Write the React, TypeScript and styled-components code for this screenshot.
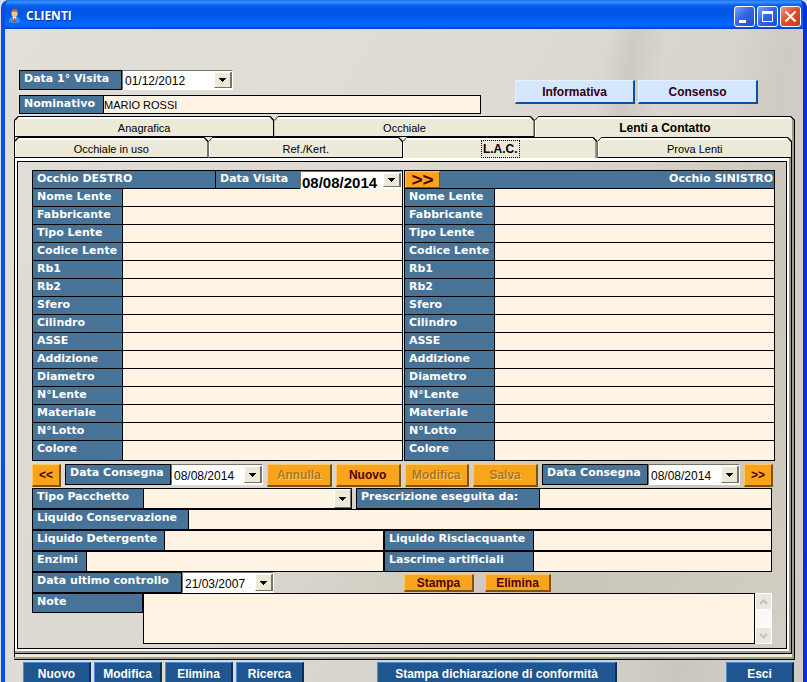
import React, { useId } from "react";
import styled, { createGlobalStyle, css } from "styled-components";

const color = {
  face: "#ece9d8",
  cream: "#fff3e3",
  steel: "#467397",
  orange: "#f9a51c",
  navy: "#1f5690",
  ink: "#000",
};
const sans = `"Liberation Sans", Arial, sans-serif`;
const caption = `"DejaVu Sans", Verdana, sans-serif`;

const GlobalStyle = createGlobalStyle`
  * { box-sizing: border-box; }
  body { margin: 0; overflow: hidden; background: #d9def5; font: 12px ${sans}; color: ${color.ink}; }
  button, input, select, textarea { font: inherit; color: inherit; border-radius: 0; margin: 0; }
`;

const Window = styled.main`
  min-height: 100vh;
  margin-left: 1px;
  display: flex;
  flex-direction: column;
  border-style: solid;
  border-color: #0a4be0 #0831d0 #0a4be0 #0a4fe4;
  border-width: 0 4px;
  border-radius: 8px 8px 0 0;
  overflow: hidden;
  background: #0a4be0;
`;

const TitleBar = styled.header`
  height: 29px;
  margin: 0 -4px;
  padding: 3px 6px 0 6px;
  display: flex;
  align-items: center;
  gap: 4px;
  background: linear-gradient(#1c6cf0 0, #3a94ff 2px, #0a62ee 5px, #0055e5 10px, #0058ea 16px, #0468ff 23px, #0364fa 26px, #0040c8 29px);
`;

const Title = styled.h1`
  flex: 1;
  margin: 0;
  font: bold 12px/20px "Open Sans", "Trebuchet MS", sans-serif;
  color: #fff;
  text-shadow: 1px 1px 0 #0a2f8f;
`;

const Controls = styled.div`
  display: flex;
  gap: 2px;
`;

const ControlButton = styled.button<{ $close?: boolean }>`
  width: 21px;
  height: 21px;
  padding: 0;
  border: 1px solid #fff;
  border-radius: 3px;
  background: ${(p) =>
    p.$close
      ? "linear-gradient(135deg, #f0987c, #e0512c 45%, #c83c14)"
      : "linear-gradient(135deg, #7ba2f5, #3566e4 45%, #1d4bd2)"};
  svg { display: block; }
`;

const Body = styled.div`
  flex: 1;
  padding: 41px 8px 0 9px;
  background:
    linear-gradient(100deg, transparent 66%, rgba(160, 155, 145, 0.22) 69%, transparent 73%, transparent 80%, rgba(160, 155, 145, 0.15) 86%, transparent 92%),
    linear-gradient(120deg, #e2dfd8 0%, #dedbd4 45%, #d3cfc6 80%, #d0ccc2 100%);
`;

const Heading = styled.div`
  display: flex;
  align-items: flex-end;
  padding: 0 37px 2px 5px;
`;

const Identity = styled.div`
  flex: 0 1 462px;
  display: flex;
  flex-direction: column;
  gap: 5px;
`;

const Notices = styled.div`
  display: flex;
  gap: 3px;
  margin: 0 0 10px auto;
`;

const Line = styled.div<{ $height: number }>`
  display: flex;
  height: ${(p) => p.$height}px;
`;

const Caption = styled.label<{ $width: number }>`
  flex: none;
  width: ${(p) => p.$width}px;
  padding-left: 4px;
  background: ${color.steel};
  border: 1px solid ${color.ink};
  color: #fff;
  font: bold 11px/15px ${caption};
  white-space: nowrap;
`;

const TextField = styled.input`
  flex: 1;
  min-width: 0;
  padding: 0;
  border: 1px solid ${color.ink};
  border-left: 0;
  outline: 0;
  background: ${color.cream};
  font-size: 11px;
`;

const DateBox = styled.div<{ $width: number; $big?: boolean }>`
  flex: none;
  width: ${(p) => p.$width}px;
  display: flex;
  background: #fff;
  border: 1px solid;
  border-color: #77746a #fff #fff #77746a;
  font: ${(p) => (p.$big ? `bold 15px ${sans}` : `12px ${sans}`)};
  input {
    flex: 1;
    width: 0;
    min-width: 0;
    padding: ${(p) => (p.$big ? "4px 0 0 1px" : "2px 0 0 2px")};
    border: 0;
    outline: 0;
    background: none;
  }
`;

const ArrowButton = styled.button`
  flex: 0 0 17px;
  padding: 0;
  display: grid;
  place-items: center;
  background: ${color.face};
  border: 1px solid;
  border-color: #fff #77746a #77746a #fff;
  box-shadow: 1px 0 0 #77746a;
  margin: 1px;
`;

const PushButton = styled.button<{ $tone: "sky" | "orange" | "navy"; $width?: number }>`
  ${(p) => (p.$width ? `flex: none; width: ${p.$width}px;` : "flex: 1;")}
  padding: 0;
  white-space: nowrap;
  font: bold 12px ${sans};
  border: 1px solid;
  border-width: 1px 2px 2px 1px;
  ${(p) =>
    p.$tone === "sky" &&
    css`
      height: 24px;
      background: #d5e6ff;
      color: #300010;
      border-color: #e8f2ff #0a4fa8 #0a4fa8 #e8f2ff;
    `}
  ${(p) =>
    p.$tone === "orange" &&
    css`
      background: ${color.orange};
      color: #500000;
      border-color: #ffc766 #7d5312 #7d5312 #ffc766;
      &:disabled {
        color: #b07416;
        text-shadow: 1px 1px 0 #ffd07a;
      }
    `}
  ${(p) =>
    p.$tone === "navy" &&
    css`
      height: 24px;
      background: ${color.navy};
      color: #fff;
      border-color: #4a8ad8 #0d2c58 #0d2c58 #4a8ad8;
    `}
`;

const Tabs = styled.div<{ $count: number }>`
  display: grid;
  grid-template-columns: repeat(${(p) => p.$count}, 1fr);
`;

const cutCorners = "polygon(0 4px, 4px 0, calc(100% - 4px) 0, 100% 4px, 100% 100%, 0 100%)";

const Tab = styled.button<{ $active?: boolean }>`
  position: relative;
  isolation: isolate;
  height: 21px;
  padding: 2px 0 0;
  border: 0;
  background: ${color.ink};
  clip-path: ${cutCorners};
  font: ${(p) => (p.$active ? "bold 12px" : "normal 11px")}/16px ${sans};
  &::before {
    content: "";
    position: absolute;
    z-index: -1;
    inset: 1px 1px ${(p) => (p.$active ? 0 : 1)}px 0;
    background: ${color.face};
    box-shadow: inset 1px 2px 0 #fff${(p) => (p.$active ? ", inset -2px 0 0 #9d9a8c" : "")};
    clip-path: ${cutCorners};
  }
  &:first-child::before { left: 1px; }
`;

const Focus = styled.span`
  display: inline-block;
  padding: 0 1px;
  outline: 1px dotted ${color.ink};
`;

const OuterPage = styled.section`
  padding: 0 2px 5px 0;
  border: solid ${color.ink};
  border-width: 0 1px 1px 0;
  background: ${color.face};
  box-shadow: inset -2px -2px 0 #a09d90, inset 1px 0 0 ${color.ink};
`;

const InnerPage = styled.section`
  padding: 3px 4px 4px 2px;
  border: solid ${color.ink};
  border-width: 0 1px 1px 1px;
  background: #fff;
  box-shadow: inset -2px -2px 0 #a09d90;
`;

const Sheet = styled.div`
  padding: 8px 11px 4px 14px;
  border: 1px solid ${color.ink};
  background: linear-gradient(125deg, #e0ddd6 0%, #dcd8d0 45%, #cbc6ba 75%, #d2cec4 100%);
`;

const Eyes = styled.div`
  display: grid;
  grid-template-columns: 1fr 1fr;
  gap: 1px;
`;

const Eye = styled.section`
  border: 1px solid ${color.ink};
  background: ${color.cream};
`;

const EyeHead = styled.header`
  display: flex;
  height: 18px;
  border-bottom: 1px solid ${color.ink};
  background: ${color.steel};
  color: #fff;
  font: bold 11px/15px ${caption};
`;

const EyeTitle = styled.h2<{ $right?: boolean }>`
  flex: 1;
  margin: 0;
  padding: 0 1px 0 4px;
  font: inherit;
  white-space: nowrap;
  text-align: ${(p) => (p.$right ? "right" : "left")};
`;

const VisitCaption = styled.label`
  flex: 0 0 85px;
  padding-left: 4px;
  border-left: 1px solid ${color.ink};
  white-space: nowrap;
`;

const VisitDate = styled.div`
  display: flex;
  height: 18px;
  color: ${color.ink};
`;

const CopyButton = styled.button`
  flex: 0 0 35px;
  padding: 0;
  border: 1px solid;
  border-color: #ffc766 #7d5312 #7d5312 #ffc766;
  background: ${color.orange};
  color: #500000;
  font: bold 19px/14px ${sans};
`;

const EyeRow = styled.div`
  display: flex;
  height: 18px;
  border-bottom: 1px solid ${color.ink};
  &:last-child { height: 19px; border-bottom: 0; }
  label {
    flex: 0 0 90px;
    padding-left: 4px;
    border-right: 1px solid ${color.ink};
    background: ${color.steel};
    color: #fff;
    font: bold 11px/15px ${caption};
    white-space: nowrap;
  }
  input {
    flex: 1;
    min-width: 0;
    padding: 0 3px;
    border: 0;
    outline: 0;
    background: none;
  }
`;

const Actions = styled.div`
  display: flex;
  gap: 4px;
  height: 23px;
  margin: 3px 2px 1px 0;
`;

const DateGroup = styled.div`
  display: flex;
  flex: none;
  height: 21px;
`;

const Details = styled.div`
  padding-right: 3px;
`;

const Pair = styled.div<{ $width?: number }>`
  display: flex;
  min-width: 0;
  ${(p) => (p.$width ? `flex: 0 0 ${p.$width}px;` : "flex: 1;")}
`;

const SelectBox = styled.div`
  flex: 1;
  margin-right: 4px;
  display: grid;
  grid-template-columns: 1fr 17px;
  border: 1px solid ${color.ink};
  border-left: 0;
  background: ${color.cream};
  select {
    grid-area: 1 / 1 / 2 / 3;
    appearance: none;
    border: 0;
    outline: 0;
    background: none;
  }
`;

const SelectArrow = styled.span`
  grid-area: 1 / 2;
  display: grid;
  place-items: center;
  pointer-events: none;
  background: ${color.face};
  border: 1px solid;
  border-color: #fff #77746a #77746a #fff;
`;

const Reports = styled.div`
  display: flex;
  gap: 11px;
  height: 18px;
  margin: 2px 0 0 130px;
`;

const NoteRow = styled.div`
  display: flex;
  align-items: flex-start;
  label { height: 20px; }
`;

const NoteText = styled.textarea`
  flex: 1;
  min-width: 0;
  height: 51px;
  padding: 2px;
  border: 1px solid ${color.ink};
  outline: 0;
  resize: none;
  overflow: hidden;
  background: ${color.cream};
`;

const Scroll = styled.div`
  flex: 0 0 17px;
  height: 51px;
  display: flex;
  flex-direction: column;
  justify-content: space-between;
  background: #fbfaf6;
  button {
    height: 17px;
    padding: 0;
    display: grid;
    place-items: center;
    border: 1px solid #fff;
    border-radius: 2px;
    background: #e9e8e0;
  }
`;

const Footer = styled.footer`
  display: flex;
  gap: 3px;
  padding: 2px 1px 0 9px;
`;

const Wide = styled.div`
  display: flex;
  flex: 0 1 240px;
  margin: 0 auto 0 70px;
`;

const Arrow = () => (
  <svg width="7" height="4" viewBox="0 0 7 4" shapeRendering="crispEdges" aria-hidden="true">
    <path d="M0 0h7L3.5 4z" />
  </svg>
);

const Chevron = ({ up }: { up?: boolean }) => (
  <svg width="9" height="6" viewBox="0 0 9 6" fill="none" stroke="#c4c2b8" strokeWidth="2" aria-hidden="true">
    <path d={up ? "M1 5l3.500-3.500L8 5" : "M1 1l3.500 3.500L8 1"} />
  </svg>
);

const PersonIcon = () => (
  <svg width="15" height="16" viewBox="0 0 15 16" aria-hidden="true">
    <path d="M2 14c0-4 2-5 5.500-5s5.500 1 5.500 5c-3 1.500-8 1.500-11 0z" fill="#3f8fe0" />
    <path d="M5.500 9l2 5 2-5z" fill="#fff" />
    <path d="M7 10h1.200l.6 3.500-1.200 1.200-1.200-1.200z" fill="#d03a22" />
    <ellipse cx="7.500" cy="5.500" rx="3" ry="3.800" fill="#f3c596" />
    <path d="M4.300 5.200C3.800 2 5.500.8 7.800.8s3.700 1.500 2.900 4.400C10 3.800 8.500 3.600 7 3.500 5.500 3.500 4.800 4 4.300 5.200z" fill="#a4682a" />
  </svg>
);

function DateField(p: { label: string; labelWidth: number; width: number; value: string }) {
  const id = useId();
  return (
    <>
      <Caption htmlFor={id} $width={p.labelWidth}>{p.label}</Caption>
      <DateBox $width={p.width}>
        <input id={id} defaultValue={p.value} />
        <ArrowButton aria-label={`Scegli ${p.label}`}><Arrow /></ArrowButton>
      </DateBox>
    </>
  );
}

function Field(p: { label: string; labelWidth: number; width?: number; value?: string }) {
  const id = useId();
  return (
    <Pair $width={p.width}>
      <Caption htmlFor={id} $width={p.labelWidth}>{p.label}</Caption>
      <TextField id={id} defaultValue={p.value} />
    </Pair>
  );
}

const eyeFields = [
  "Nome Lente", "Fabbricante", "Tipo Lente", "Codice Lente", "Rb1", "Rb2", "Sfero", "Cilindro",
  "ASSE", "Addizione", "Diametro", "N°Lente", "Materiale", "N°Lotto", "Colore",
];

function EyeRows({ side }: { side: string }) {
  return (
    <div>
      {eyeFields.map((name, i) => (
        <EyeRow key={name}>
          <label htmlFor={`${side}-${i}`}>{name}</label>
          <input id={`${side}-${i}`} />
        </EyeRow>
      ))}
    </div>
  );
}

export default function App() {
  return (
    <>
      <GlobalStyle />
      <Window>
        <TitleBar>
          <PersonIcon />
          <Title>CLIENTI</Title>
          <Controls>
            <ControlButton aria-label="Riduci a icona">
              <svg width="19" height="19"><path d="M4 13h7v3H4z" fill="#fff" /></svg>
            </ControlButton>
            <ControlButton aria-label="Ingrandisci">
              <svg width="19" height="19" fill="none" stroke="#fff"><path d="M4.500 5v9.500h10V5" /><path d="M4 5.500h11" strokeWidth="3" /></svg>
            </ControlButton>
            <ControlButton $close aria-label="Chiudi">
              <svg width="19" height="19" stroke="#fff" strokeWidth="2.200"><path d="M4.500 4.500l10 10M14.500 4.500l-10 10" /></svg>
            </ControlButton>
          </Controls>
        </TitleBar>

        <Body>
          <Heading>
            <Identity>
              <Line $height={20}>
                <DateField label="Data 1° Visita" labelWidth={103} width={111} value="01/12/2012" />
              </Line>
              <Line $height={19}>
                <Field label="Nominativo" labelWidth={85} value="MARIO ROSSI" />
              </Line>
            </Identity>
            <Notices>
              <PushButton $tone="sky" $width={120}>Informativa</PushButton>
              <PushButton $tone="sky" $width={120}>Consenso</PushButton>
            </Notices>
          </Heading>

          <Tabs $count={3} role="tablist">
            <Tab role="tab" aria-selected={false}>Anagrafica</Tab>
            <Tab role="tab" aria-selected={false}>Occhiale</Tab>
            <Tab role="tab" aria-selected $active>Lenti a Contatto</Tab>
          </Tabs>
          <OuterPage>
            <Tabs $count={4} role="tablist">
              <Tab role="tab" aria-selected={false}>Occhiale in uso</Tab>
              <Tab role="tab" aria-selected={false}>Ref./Kert.</Tab>
              <Tab role="tab" aria-selected $active><Focus>L.A.C.</Focus></Tab>
              <Tab role="tab" aria-selected={false}>Prova Lenti</Tab>
            </Tabs>
            <InnerPage>
              <Sheet>
                <Eyes>
                  <Eye>
                    <EyeHead>
                      <EyeTitle>Occhio DESTRO</EyeTitle>
                      <VisitCaption htmlFor="visita">Data Visita</VisitCaption>
                      <VisitDate>
                        <DateBox $width={102} $big>
                          <input id="visita" defaultValue="08/08/2014" />
                          <ArrowButton aria-label="Scegli Data Visita"><Arrow /></ArrowButton>
                        </DateBox>
                      </VisitDate>
                    </EyeHead>
                    <EyeRows side="destro" />
                  </Eye>
                  <Eye>
                    <EyeHead>
                      <CopyButton aria-label="Copia a sinistro">&gt;&gt;</CopyButton>
                      <EyeTitle $right>Occhio SINISTRO</EyeTitle>
                    </EyeHead>
                    <EyeRows side="sinistro" />
                  </Eye>
                </Eyes>

                <Actions>
                  <PushButton $tone="orange" $width={29}>&lt;&lt;</PushButton>
                  <DateGroup>
                    <DateField label="Data Consegna" labelWidth={106} width={92} value="08/08/2014" />
                  </DateGroup>
                  <PushButton $tone="orange" disabled>Annulla</PushButton>
                  <PushButton $tone="orange">Nuovo</PushButton>
                  <PushButton $tone="orange" disabled>Modifica</PushButton>
                  <PushButton $tone="orange" disabled>Salva</PushButton>
                  <DateGroup>
                    <DateField label="Data Consegna" labelWidth={106} width={92} value="08/08/2014" />
                  </DateGroup>
                  <PushButton $tone="orange" $width={29}>&gt;&gt;</PushButton>
                </Actions>

                <Details>
                  <Line $height={21}>
                    <Pair $width={324}>
                      <Caption htmlFor="pacchetto" $width={112}>Tipo Pacchetto</Caption>
                      <SelectBox>
                        <select id="pacchetto" defaultValue=""><option value="" /></select>
                        <SelectArrow><Arrow /></SelectArrow>
                      </SelectBox>
                    </Pair>
                    <Field label="Prescrizione eseguita da:" labelWidth={184} />
                  </Line>
                  <Line $height={21}>
                    <Field label="Liquido Conservazione" labelWidth={157} />
                  </Line>
                  <Line $height={21}>
                    <Field label="Liquido Detergente" labelWidth={133} width={352} />
                    <Field label="Liquido Risciacquante" labelWidth={150} />
                  </Line>
                  <Line $height={21}>
                    <Field label="Enzimi" labelWidth={55} width={352} />
                    <Field label="Lascrime artificiali" labelWidth={150} />
                  </Line>
                  <Line $height={21}>
                    <DateField label="Data ultimo controllo" labelWidth={150} width={92} value="21/03/2007" />
                    <Reports>
                      <PushButton $tone="orange" $width={70}>Stampa</PushButton>
                      <PushButton $tone="orange" $width={66}>Elimina</PushButton>
                    </Reports>
                  </Line>
                  <NoteRow>
                    <Caption htmlFor="note" $width={111}>Note</Caption>
                    <NoteText id="note" />
                    <Scroll>
                      <button aria-label="Scorri su"><Chevron up /></button>
                      <button aria-label="Scorri giù"><Chevron /></button>
                    </Scroll>
                  </NoteRow>
                </Details>
              </Sheet>
            </InnerPage>
          </OuterPage>

          <Footer>
            <PushButton $tone="navy" $width={68}>Nuovo</PushButton>
            <PushButton $tone="navy" $width={68}>Modifica</PushButton>
            <PushButton $tone="navy" $width={68}>Elimina</PushButton>
            <PushButton $tone="navy" $width={68}>Ricerca</PushButton>
            <Wide>
              <PushButton $tone="navy">Stampa dichiarazione di conformità</PushButton>
            </Wide>
            <PushButton $tone="navy" $width={68}>Esci</PushButton>
          </Footer>
        </Body>
      </Window>
    </>
  );
}
